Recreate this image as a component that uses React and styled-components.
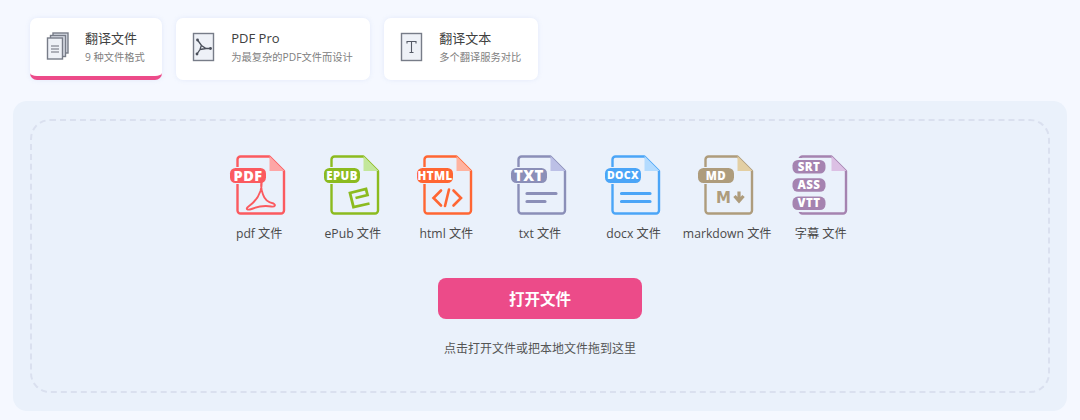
import React from "react";
import styled, { createGlobalStyle } from "styled-components";

const GlobalStyle = createGlobalStyle`
  html, body {
    margin: 0;
    background: #f5f8ff;
    font-family: "Open Sans", "Noto Sans CJK SC", sans-serif;
  }
`;

const Page = styled.div`
  width: 1080px;
  height: 420px;
  overflow: hidden;
  padding-top: 18px;
  box-sizing: border-box;
`;

const Tabs = styled.div`
  display: flex;
  gap: 14.5px;
  margin-left: 30px;
`;

const Tab = styled.div`
  display: flex;
  align-items: flex-start;
  gap: 17px;
  height: 62px;
  padding: 13px 17px 0;
  box-sizing: border-box;
  background: #fff;
  border-radius: 7px;
  box-shadow: 0 0 5px rgba(120, 150, 220, 0.14);
  border-bottom: ${(p) => (p.$active ? "4px solid #ec4b89" : "none")};
`;

const TabIcon = styled.svg`
  width: 23px;
  height: 30px;
  margin: 1px -1px 0;
  flex: none;
`;

const TabText = styled.div`
  display: flex;
  flex-direction: column;
`;

const TabTitle = styled.div`
  font-size: 13px;
  line-height: 15px;
  color: #404040;
  white-space: nowrap;
`;

const TabSub = styled.div`
  font-size: 10.25px;
  line-height: 14px;
  margin-top: 4px;
  color: #808080;
  white-space: nowrap;
`;

const Panel = styled.div`
  margin: 21px 13px 0;
  height: 310px;
  padding: 18px 17px;
  box-sizing: border-box;
  background: #eaf1fb;
  border-radius: 14px;
`;

const DropZone = styled.div`
  height: 274px;
  box-sizing: border-box;
  border: 2px dashed #dae0ef;
  border-radius: 20px;
  display: flex;
  flex-direction: column;
  align-items: center;
  padding-top: 32px;
`;

const Formats = styled.div`
  display: flex;
  justify-content: center;
`;

const Format = styled.div`
  width: 93.6px;
  display: flex;
  flex-direction: column;
  align-items: center;
`;

const FormatIcon = styled.svg`
  width: 64px;
  height: 64px;
  display: block;
`;

const FormatLabel = styled.div`
  margin-top: 8px;
  font-size: 12.2px;
  line-height: 18px;
  color: #4a4a4a;
  white-space: nowrap;
`;

const BadgeText = styled.text`
  font-family: "Open Sans", sans-serif;
  font-weight: 800;
  fill: #fff;
  text-anchor: middle;
  letter-spacing: 0.4px;
  font-size: ${(p) => p.$size}px;
`;

const MdMark = styled.text`
  font-family: "DejaVu Sans", sans-serif;
  font-weight: 700;
  font-size: 15px;
  text-anchor: middle;
`;

const OpenButton = styled.button`
  width: 204px;
  height: 41px;
  margin-top: 35px;
  border: none;
  border-radius: 8px;
  background: #ec4b89;
  color: #fff;
  font-family: inherit;
  font-size: 15.5px;
  font-weight: 700;
`;

const Hint = styled.div`
  margin-top: 21px;
  font-size: 12px;
  line-height: 18px;
  color: #555;
`;

const Sheet = ({ color, fold }) => (
  <>
    <path
      d="M12 3.500H41L55.500 18V57.500a3 3 0 0 1-3 3H12a3 3 0 0 1-3-3V6.500a3 3 0 0 1 3-3z"
      fill="none"
      stroke={color}
      strokeWidth="2.400"
      strokeLinejoin="round"
    />
    <path d="M41 3L56 18H41z" fill={fold} />
  </>
);

const Badge = ({ color, text, y = 15, w = 36, h = 15, x = 1.5, size = 12.5 }) => (
  <>
    <rect x={x} y={y} width={w} height={h} rx={5.5} fill={color} />
    <BadgeText $size={size} x={x + w / 2} y={y + h / 2 + size * 0.36}>
      {text}
    </BadgeText>
  </>
);

const formats = [
  {
    label: "pdf 文件",
    color: "#fb5a5f",
    fold: "#fda6a6",
    badge: "PDF",
    size: 14.500,
    art: (c) => (
      <path
        d="M33 29c.5 4-.5 7-1 9-2 6-7 12-12 15.500-3.500 2.500-1 4 3 2.500 6-2.500 14-3.500 20-2.500 3.500.5 4.500-1.500 2-3-5-1-9-4-10.500-9-1.500-4-2.500-8-1.500-12.500"
        fill="none"
        stroke={c}
        strokeWidth="1.900"
      />
    ),
  },
  {
    label: "ePub 文件",
    color: "#8cbb1f",
    fold: "#c3e79a",
    badge: "EPUB",
    size: 11.500,
    art: (c) => (
      <path d="M33 45L45 42L43.500 36L27.500 40L31 54L47 50.500" fill="none" stroke={c} strokeWidth="2.800" />
    ),
  },
  {
    label: "html 文件",
    color: "#ff6633",
    fold: "#ffb3a0",
    badge: "HTML",
    size: 11.500,
    art: (c) => (
      <path
        d="M25.500 37.500L18 45L25.500 52.500M38 37.500L45.500 45L38 52.500M33.500 36.500L29.500 53"
        fill="none"
        stroke={c}
        strokeWidth="2.600"
        strokeLinecap="round"
      />
    ),
  },
  {
    label: "txt 文件",
    color: "#8b8fb8",
    fold: "#bcc0e6",
    badge: "TXT",
    size: 15,
    art: (c) => (
      <path d="M17.500 40.500H46.500M17.500 48.500H35.500" fill="none" stroke={c} strokeWidth="3.200" strokeLinecap="round" />
    ),
  },
  {
    label: "docx 文件",
    color: "#4ba5f7",
    fold: "#b3dbff",
    badge: "DOCX",
    size: 10.500,
    art: (c) => (
      <path d="M18 40.500H46.500M18 48.500H46.500" fill="none" stroke={c} strokeWidth="3.200" strokeLinecap="round" />
    ),
  },
  {
    label: "markdown 文件",
    color: "#ae9c7c",
    fold: "#e3cfa3",
    badge: "MD",
    size: 11.500,
    art: (c) => (
      <>
        <MdMark x="27" y="49.500" fill={c}>
          M
        </MdMark>
        <path d="M42.500 38.500V47M38 43L42.500 48L47 43" fill="none" stroke={c} strokeWidth="3.200" />
      </>
    ),
  },
  {
    label: "字幕 文件",
    color: "#a583b0",
    fold: "#dcc0e4",
    stack: ["SRT", "ASS", "VTT"],
  },
];

const FormatGlyph = ({ item }) => (
  <FormatIcon viewBox="-1.500 0 64 64">
    <Sheet color={item.color} fold={item.fold} />
    {item.stack ? (
      <>
        <rect x="0" y="5" width="36.500" height="54" fill="#eaf1fb" />
        {item.stack.map((t, i) => (
          <Badge key={t} color={item.color} text={t} x={2} w={33} h={13.500} y={7 + i * 18.300} size={11.500} />
        ))}
      </>
    ) : (
      <>
        <rect x="0" y="14" width="39" height="17" fill="#eaf1fb" />
        <Badge color={item.color} text={item.badge} size={item.size} />
        {item.art(item.color)}
      </>
    )}
  </FormatIcon>
);

const ico = { fill: "#eef1f7", stroke: "#777c88", strokeWidth: 1.4 };
const icoBack = { fill: "#d9dde6", stroke: "#777c88", strokeWidth: 1.4 };

const tabs = [
  {
    title: "翻译文件",
    sub: "9 种文件格式",
    active: true,
    icon: (
      <>
        <rect x="7" y="1" width="15" height="20" {...icoBack} />
        <rect x="4.500" y="3.500" width="15" height="21" {...icoBack} />
        <rect x="1.500" y="6" width="15" height="21" {...ico} />
        <path d="M5 14H13M5 17H13M5 20H13" stroke="#6a6f7a" strokeWidth="1.100" />
      </>
    ),
  },
  {
    title: "PDF Pro",
    sub: "为最复杂的PDF文件而设计",
    icon: (
      <>
        <rect x="1.500" y="1.500" width="20" height="27" {...ico} />
        <path
          d="M5.500 8L9.500 13.500L14 16.500L18.500 16.500M5 22L8 17.500L9.500 13M8 17.500L14 16.500"
          fill="none"
          stroke="#4a4f5a"
          strokeWidth="1.300"
        />
        <circle cx="5.500" cy="8" r="1.400" fill="#4a4f5a" />
        <circle cx="5" cy="22" r="1.400" fill="#4a4f5a" />
        <circle cx="18.500" cy="16.500" r="1.400" fill="#4a4f5a" />
      </>
    ),
  },
  {
    title: "翻译文本",
    sub: "多个翻译服务对比",
    icon: (
      <>
        <rect x="1.500" y="1.500" width="20" height="27" {...ico} />
        <path d="M7 11.500V9.500H16V11.500M11.500 9.500V20.500M9.500 20.500H13.500" fill="none" stroke="#555a66" strokeWidth="1.100" />
      </>
    ),
  },
];

export default function App() {
  return (
    <Page>
      <GlobalStyle />
      <Tabs>
        {tabs.map((t) => (
          <Tab key={t.title} $active={t.active}>
            <TabIcon viewBox="0 0 23 30">{t.icon}</TabIcon>
            <TabText>
              <TabTitle>{t.title}</TabTitle>
              <TabSub>{t.sub}</TabSub>
            </TabText>
          </Tab>
        ))}
      </Tabs>
      <Panel>
        <DropZone>
          <Formats>
            {formats.map((f) => (
              <Format key={f.label}>
                <FormatGlyph item={f} />
                <FormatLabel>{f.label}</FormatLabel>
              </Format>
            ))}
          </Formats>
          <OpenButton>打开文件</OpenButton>
          <Hint>点击打开文件或把本地文件拖到这里</Hint>
        </DropZone>
      </Panel>
    </Page>
  );
}
